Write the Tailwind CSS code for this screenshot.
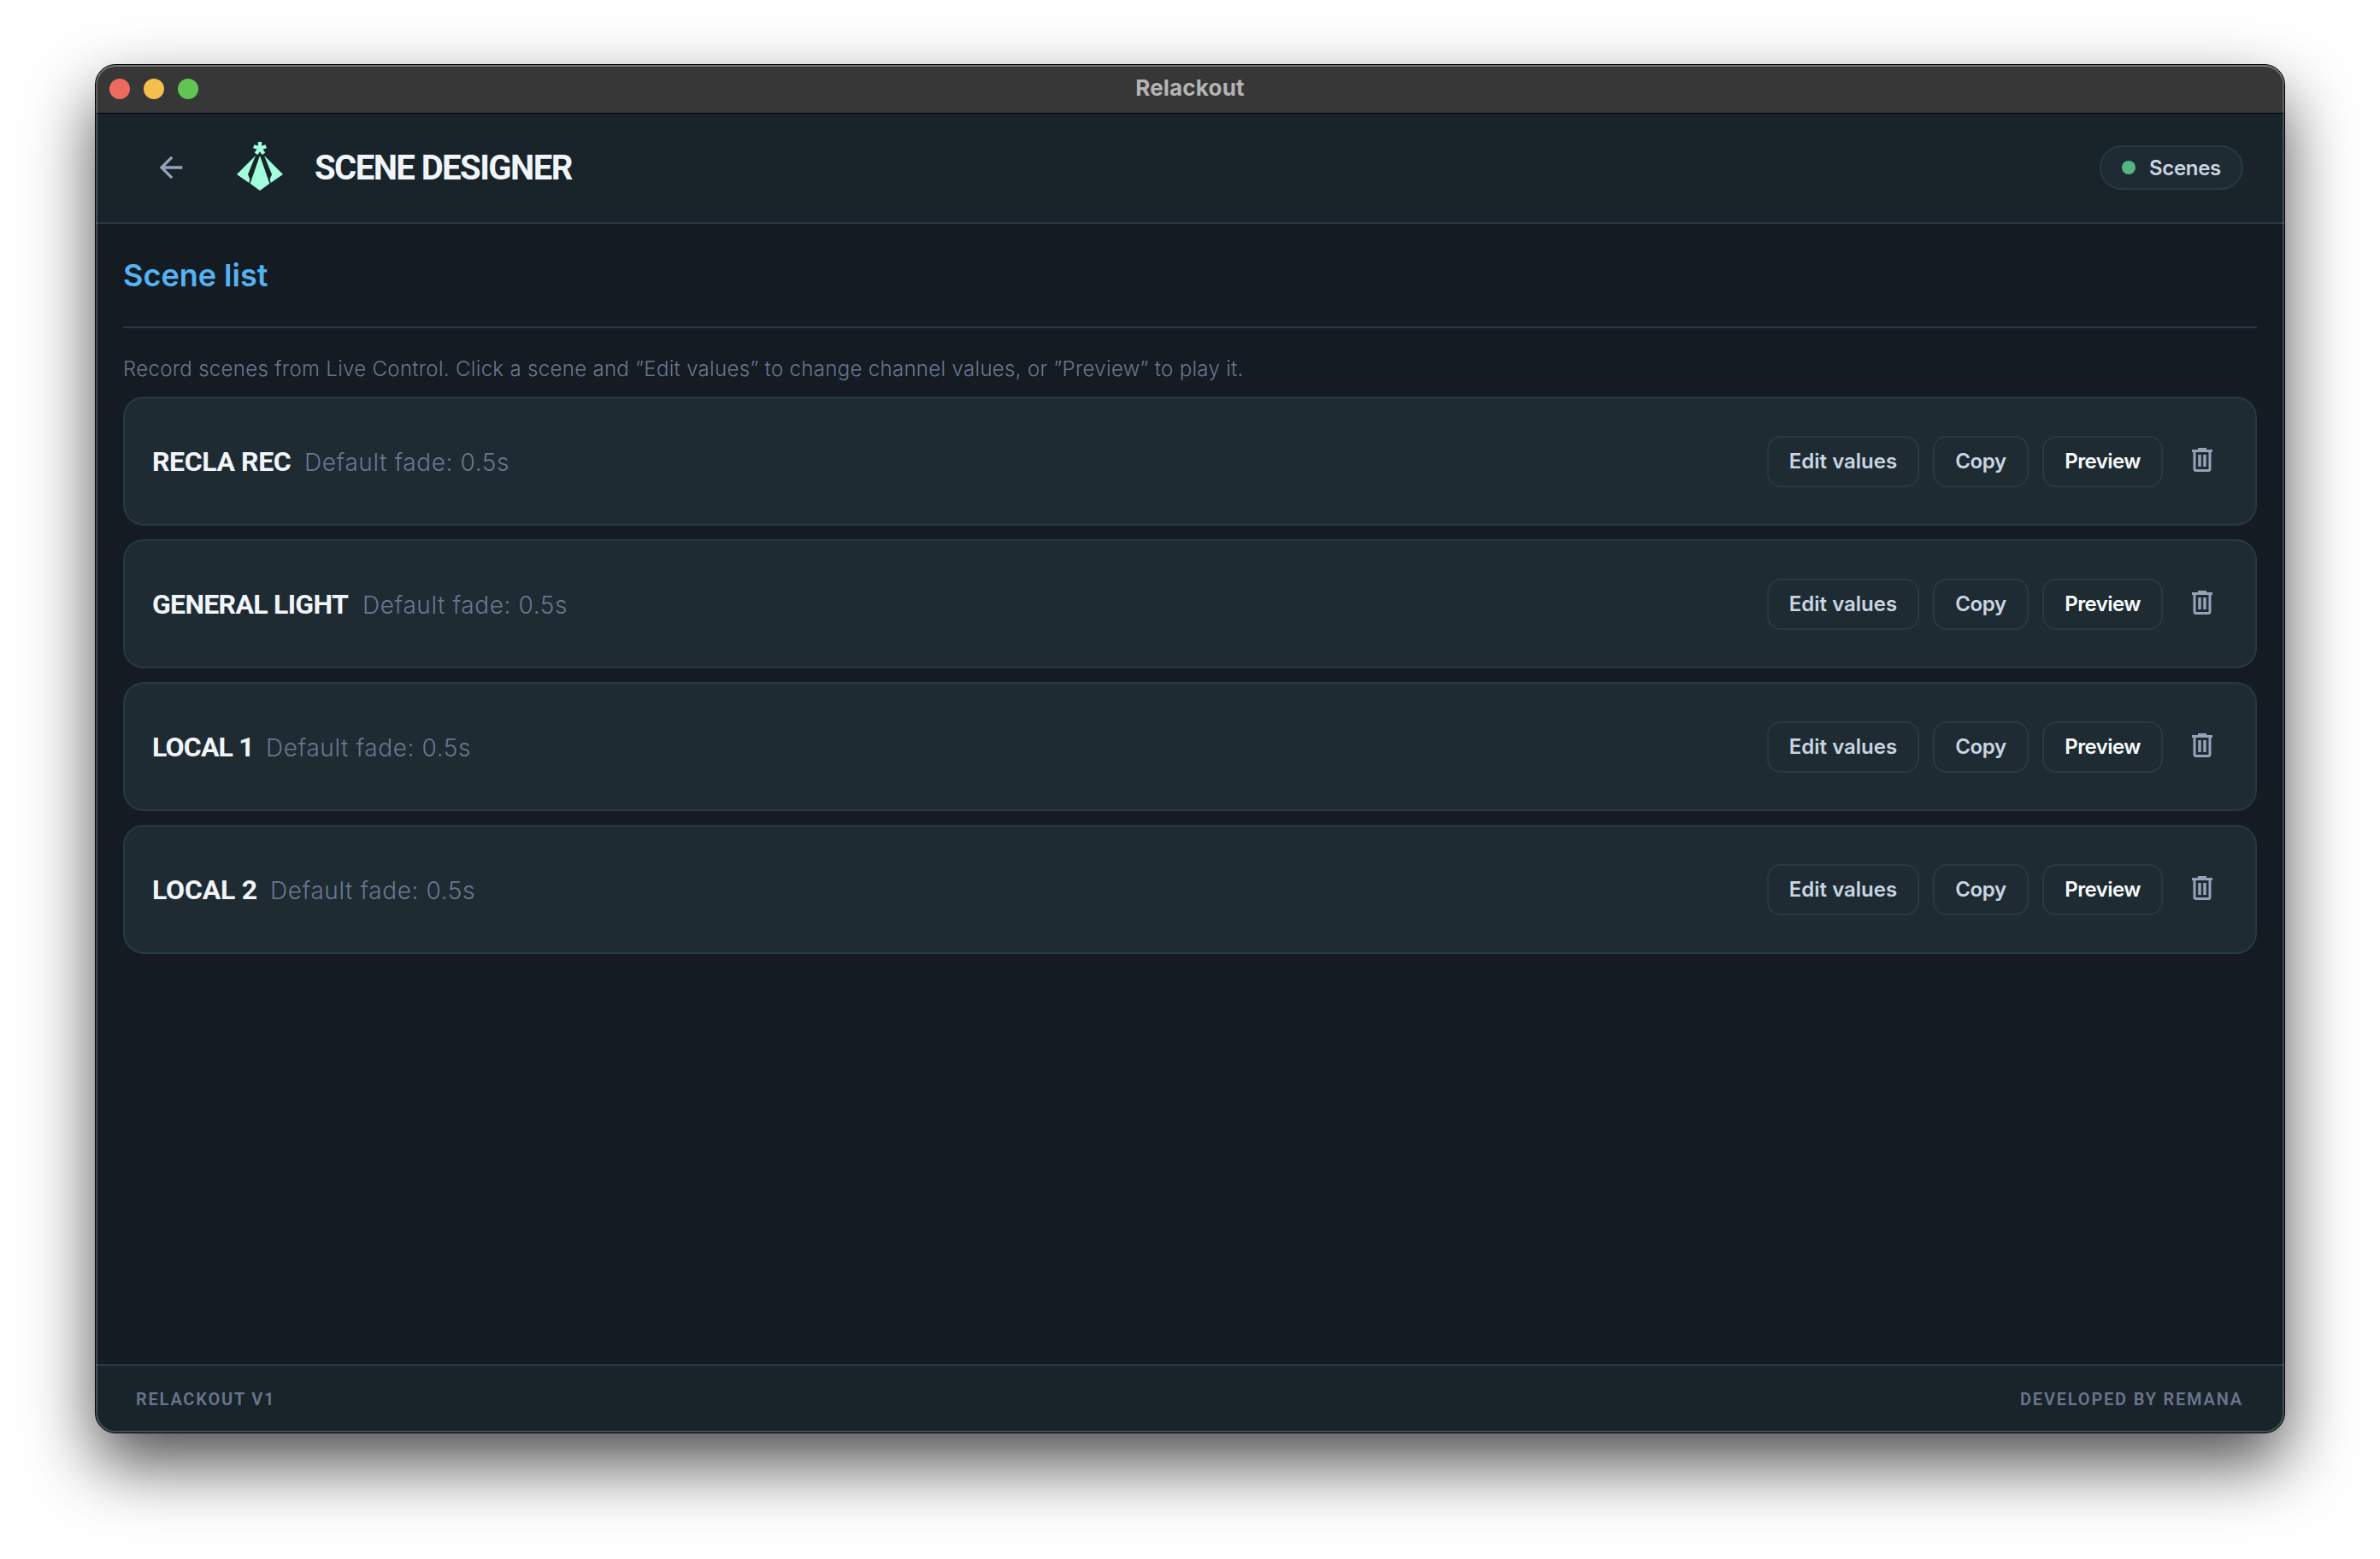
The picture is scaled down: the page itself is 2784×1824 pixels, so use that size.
<!DOCTYPE html>
<html lang="en">

<head>
  <meta charset="UTF-8" />
  <meta name="viewport" content="width=device-width, initial-scale=1.0" />
  <title>Relackout</title>
  <script src="https://cdn.jsdelivr.net/npm/@tailwindcss/browser@4"></script>
</head>

<body class="bg-white w-[2784px] h-[1824px] overflow-hidden px-28 pt-[76px] font-['Inter',sans-serif]">
  <div class="relative flex flex-col w-[2560px] h-[1600px] rounded-[23px] overflow-hidden bg-[#141b22] outline outline-black shadow-[0_36px_80px_rgba(0,0,0,0.7)]">

    <!-- title bar -->
    <div class="grid grid-cols-3 items-center h-14 shrink-0 bg-[#373737] px-4">
      <div class="flex gap-4">
        <span class="size-6 rounded-full bg-[#ed6a5e]"></span>
        <span class="size-6 rounded-full bg-[#f5bf4f]"></span>
        <span class="size-6 rounded-full bg-[#61c554]"></span>
      </div>
      <div class="text-center text-[26px] leading-8 pb-[3px] font-bold tracking-[0.2px] text-[#b4b4b4]">Relackout</div>
    </div>

    <!-- header -->
    <header class="flex items-center h-[130px] shrink-0 bg-[#18242a] border-b-2 border-[#263a45] shadow-[inset_0_1px_0_#000] pl-[68px] pr-12">
      <button class="text-[#94a3b8]">
        <svg class="size-10" viewBox="0 0 24 24" fill="currentColor"><path d="M20 11H7.83l5.59-5.59L12 4l-8 8 8 8 1.41-1.41L7.83 13H20v-2z" /></svg>
      </button>
      <svg class="w-[54px] h-[58px] ml-[57px] mb-[2px]" viewBox="0 0 162 174" fill="#a1fddb">
        <g stroke="#a1fddb" stroke-width="13">
          <path d="M81 23V0" />
          <path d="M81 23V0" transform="rotate(72 81 23)" />
          <path d="M81 23V0" transform="rotate(144 81 23)" />
          <path d="M81 23V0" transform="rotate(216 81 23)" />
          <path d="M81 23V0" transform="rotate(288 81 23)" />
        </g>
        <path d="M81 48L115 146L81 171L47 146Z" />
        <path d="M66 48L0 114L43 144L46 131L39 114Z" />
        <path d="M96 48L162 114L119 144L116 131L123 114Z" />
      </svg>
      <h1 class="ml-[37px] font-['Roboto',sans-serif] text-[40px] leading-[48px] pt-[1px] font-bold tracking-[-1.55px] text-slate-100">SCENE DESIGNER</h1>
      <div class="ml-auto flex items-center w-[168px] h-[52px] rounded-full border-2 border-[#263a45] bg-[#1e2b32] pl-6">
        <span class="size-4 rounded-full bg-[#55b685]"></span>
        <span class="ml-4 pt-[1px] text-2xl font-semibold tracking-[-0.33px] text-slate-300">Scenes</span>
      </div>
    </header>

    <!-- scene list -->
    <main class="grow px-8">
      <div class="flex items-center h-[122px] border-b-2 border-[#263a45]">
        <h2 class="text-[36px] leading-[44px] font-semibold text-[#56b2f0]">Scene list</h2>
      </div>
      <p class="flex items-center h-20 pt-4 text-2xl font-light tracking-[0.32px] text-[#6b768f] whitespace-nowrap">Record scenes from Live Control. Click a scene and ”Edit values” to change channel values, or ”Preview” to play it.</p>

      <div class="flex flex-col gap-4">
        <div class="flex items-center h-[151px] rounded-3xl border-2 border-[#263a45] bg-[#1e2b32] px-8">
          <div class="flex items-baseline gap-[15px] whitespace-nowrap">
            <span class="w-[163px] font-['Roboto',sans-serif] text-[32px] font-bold tracking-[-0.4px] text-slate-100">RECLA REC</span>
            <span class="text-[28px] font-light tracking-[0.6px] text-[#6b768f]">Default fade: 0.5s</span>
          </div>
          <div class="ml-auto flex items-center gap-4 text-2xl font-semibold text-slate-300">
            <button class="w-[178px] h-[60px] rounded-2xl border-2 border-[#263a45]">Edit values</button>
            <button class="w-[112px] h-[60px] rounded-2xl border-2 border-[#263a45] tracking-[-0.4px]">Copy</button>
            <button class="w-[141px] h-[60px] rounded-2xl border-2 border-[#263a45] tracking-[-0.6px] text-slate-50">Preview</button>
            <button class="w-[60px] flex justify-center pb-1 text-[#94a3b8]">
              <svg class="w-6 h-7" viewBox="0 0 24 28" fill="none" stroke="currentColor"><path d="M0 3.5H24M7 1H17" stroke-width="3" /><path d="M3 4V24.500Q3 26.500 5 26.500H19Q21 26.500 21 24.500V4" stroke-width="3" /><path d="M9 8V22M15 8V22" stroke-width="3.500" /></svg>
            </button>
          </div>
        </div>

        <div class="flex items-center h-[151px] rounded-3xl border-2 border-[#263a45] bg-[#1e2b32] px-8">
          <div class="flex items-baseline gap-[15px] whitespace-nowrap">
            <span class="w-[231px] font-['Roboto',sans-serif] text-[32px] font-bold tracking-[-0.7px] text-slate-100">GENERAL LIGHT</span>
            <span class="text-[28px] font-light tracking-[0.6px] text-[#6b768f]">Default fade: 0.5s</span>
          </div>
          <div class="ml-auto flex items-center gap-4 text-2xl font-semibold text-slate-300">
            <button class="w-[178px] h-[60px] rounded-2xl border-2 border-[#263a45]">Edit values</button>
            <button class="w-[112px] h-[60px] rounded-2xl border-2 border-[#263a45] tracking-[-0.4px]">Copy</button>
            <button class="w-[141px] h-[60px] rounded-2xl border-2 border-[#263a45] tracking-[-0.6px] text-slate-50">Preview</button>
            <button class="w-[60px] flex justify-center pb-1 text-[#94a3b8]">
              <svg class="w-6 h-7" viewBox="0 0 24 28" fill="none" stroke="currentColor"><path d="M0 3.5H24M7 1H17" stroke-width="3" /><path d="M3 4V24.500Q3 26.500 5 26.500H19Q21 26.500 21 24.500V4" stroke-width="3" /><path d="M9 8V22M15 8V22" stroke-width="3.500" /></svg>
            </button>
          </div>
        </div>

        <div class="flex items-center h-[151px] rounded-3xl border-2 border-[#263a45] bg-[#1e2b32] px-8">
          <div class="flex items-baseline gap-[15px] whitespace-nowrap">
            <span class="w-[118px] font-['Roboto',sans-serif] text-[32px] font-bold tracking-[-0.8px] text-slate-100">LOCAL 1</span>
            <span class="text-[28px] font-light tracking-[0.6px] text-[#6b768f]">Default fade: 0.5s</span>
          </div>
          <div class="ml-auto flex items-center gap-4 text-2xl font-semibold text-slate-300">
            <button class="w-[178px] h-[60px] rounded-2xl border-2 border-[#263a45]">Edit values</button>
            <button class="w-[112px] h-[60px] rounded-2xl border-2 border-[#263a45] tracking-[-0.4px]">Copy</button>
            <button class="w-[141px] h-[60px] rounded-2xl border-2 border-[#263a45] tracking-[-0.6px] text-slate-50">Preview</button>
            <button class="w-[60px] flex justify-center pb-1 text-[#94a3b8]">
              <svg class="w-6 h-7" viewBox="0 0 24 28" fill="none" stroke="currentColor"><path d="M0 3.5H24M7 1H17" stroke-width="3" /><path d="M3 4V24.500Q3 26.500 5 26.500H19Q21 26.500 21 24.500V4" stroke-width="3" /><path d="M9 8V22M15 8V22" stroke-width="3.500" /></svg>
            </button>
          </div>
        </div>

        <div class="flex items-center h-[151px] rounded-3xl border-2 border-[#263a45] bg-[#1e2b32] px-8">
          <div class="flex items-baseline gap-[15px] whitespace-nowrap">
            <span class="w-[123px] font-['Roboto',sans-serif] text-[32px] font-bold tracking-[-0.2px] text-slate-100">LOCAL 2</span>
            <span class="text-[28px] font-light tracking-[0.6px] text-[#6b768f]">Default fade: 0.5s</span>
          </div>
          <div class="ml-auto flex items-center gap-4 text-2xl font-semibold text-slate-300">
            <button class="w-[178px] h-[60px] rounded-2xl border-2 border-[#263a45]">Edit values</button>
            <button class="w-[112px] h-[60px] rounded-2xl border-2 border-[#263a45] tracking-[-0.4px]">Copy</button>
            <button class="w-[141px] h-[60px] rounded-2xl border-2 border-[#263a45] tracking-[-0.6px] text-slate-50">Preview</button>
            <button class="w-[60px] flex justify-center pb-1 text-[#94a3b8]">
              <svg class="w-6 h-7" viewBox="0 0 24 28" fill="none" stroke="currentColor"><path d="M0 3.5H24M7 1H17" stroke-width="3" /><path d="M3 4V24.500Q3 26.500 5 26.500H19Q21 26.500 21 24.500V4" stroke-width="3" /><path d="M9 8V22M15 8V22" stroke-width="3.500" /></svg>
            </button>
          </div>
        </div>
      </div>
    </main>

    <!-- footer -->
    <footer class="flex items-center justify-between h-20 shrink-0 bg-[#18242a] border-t-2 border-[#263a45] pl-[47px] pr-12 font-['Roboto',sans-serif] text-xl font-semibold tracking-[1.8px] text-[#6a758c]">
      <span>RELACKOUT V1</span>
      <span>DEVELOPED BY REMANA</span>
    </footer>

    <!-- window edge highlight -->
    <div class="absolute inset-0 rounded-[23px] pointer-events-none shadow-[inset_0_0_0_2px_rgba(255,255,255,0.2),inset_0_2px_0_rgba(255,255,255,0.15)]"></div>
  </div>
</body>

</html>
